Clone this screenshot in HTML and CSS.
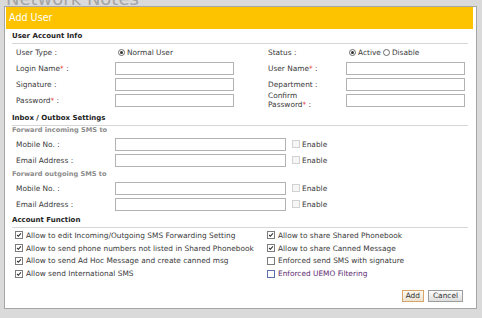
FILE: index.html
```html
<!DOCTYPE html>
<html>
  <head>
    <meta charset="UTF-8" />
    <title>Add User</title>
    <link rel="stylesheet" href="styles.css">
  </head>
  <body>
    <h1 class="page-title">Network Notes</h1>

    <div class="dialog">
      <div class="dialog-title">Add User</div>
      <div class="dialog-body">

        <div class="section-head first">User Account Info</div>
        <div class="info-grid">
          <div class="label">User Type :</div>
          <div class="field"><span class="radio on"></span>Normal User</div>
          <div class="label">Status :</div>
          <div class="field"><span class="radio on"></span>Active <span class="radio gap"></span>Disable</div>

          <div class="label">Login Name<span class="req">*</span> :</div>
          <div class="field"><input type="text" class="text-in" /></div>
          <div class="label">User Name<span class="req">*</span> :</div>
          <div class="field"><input type="text" class="text-in" /></div>

          <div class="label">Signature :</div>
          <div class="field"><input type="text" class="text-in" /></div>
          <div class="label">Department :</div>
          <div class="field"><input type="text" class="text-in" /></div>

          <div class="label">Password<span class="req">*</span> :</div>
          <div class="field"><input type="text" class="text-in" /></div>
          <div class="label two-line">Confirm<br />Password<span class="req">*</span> :</div>
          <div class="field"><input type="text" class="text-in" /></div>
        </div>

        <div class="section-head">Inbox / Outbox Settings</div>
        <div class="sub-head">Forward incoming SMS to</div>
        <div class="fwd-grid">
          <div class="label">Mobile No. :</div>
          <div class="field"><input type="text" class="text-in wide" /></div>
          <div class="field"><span class="check off"></span>Enable</div>
          <div class="label">Email Address :</div>
          <div class="field"><input type="text" class="text-in wide" /></div>
          <div class="field"><span class="check off"></span>Enable</div>
        </div>
        <div class="sub-head second">Forward outgoing SMS to</div>
        <div class="fwd-grid">
          <div class="label">Mobile No. :</div>
          <div class="field"><input type="text" class="text-in wide" /></div>
          <div class="field"><span class="check off"></span>Enable</div>
          <div class="label">Email Address :</div>
          <div class="field"><input type="text" class="text-in wide" /></div>
          <div class="field"><span class="check off"></span>Enable</div>
        </div>

        <div class="section-head third">Account Function</div>
        <div class="func-grid">
          <div class="field"><span class="check"><svg viewBox="0 0 7 7"><path d="M1.3 3.5 L2.8 5 L5.7 1.7" /></svg></span>Allow to edit Incoming/Outgoing SMS Forwarding Setting</div>
          <div class="field"><span class="check"><svg viewBox="0 0 7 7"><path d="M1.3 3.5 L2.8 5 L5.7 1.7" /></svg></span>Allow to share Shared Phonebook</div>
          <div class="field"><span class="check"><svg viewBox="0 0 7 7"><path d="M1.3 3.5 L2.8 5 L5.7 1.7" /></svg></span>Allow to send phone numbers not listed in Shared Phonebook</div>
          <div class="field"><span class="check"><svg viewBox="0 0 7 7"><path d="M1.3 3.5 L2.8 5 L5.7 1.7" /></svg></span>Allow to share Canned Message</div>
          <div class="field"><span class="check"><svg viewBox="0 0 7 7"><path d="M1.3 3.5 L2.8 5 L5.7 1.7" /></svg></span>Allow to send Ad Hoc Message and create canned msg</div>
          <div class="field"><span class="check"></span>Enforced send SMS with signature</div>
          <div class="field"><span class="check"><svg viewBox="0 0 7 7"><path d="M1.3 3.5 L2.8 5 L5.7 1.7" /></svg></span>Allow send International SMS</div>
          <div class="field hover"><span class="check"></span>Enforced UEMO Filtering</div>
        </div>

        <div class="buttons">
          <button class="btn add">Add</button>
          <button class="btn cancel">Cancel</button>
        </div>

      </div>
    </div>
  </body>
</html>
```

FILE: styles.css
```css
body {
  margin: 0;
  background: #dadada;
  font-family: "DejaVu Sans", Verdana, sans-serif;
  font-size: 7.4px;
  color: #3a3a3a;
}
.page-title {
  margin: -10px 0 0 6px;
  font-size: 18px;
  line-height: 18px;
  font-weight: normal;
  color: #a4a4a4;
}
.dialog {
  position: absolute;
  left: 4px;
  top: 6px;
  width: 473px;
  height: 303px;
  box-sizing: border-box;
  border: 1px solid #a6a6a6;
  background: #fff;
}
.dialog-title {
  margin: 0 3px 0 1px;
  height: 22px;
  line-height: 22px;
  padding-left: 3px;
  background: #fdc300;
  color: #fff;
  font-size: 9.6px;
}
.dialog-body {
  padding: 0 8px 0 7px;
}
.section-head {
  padding-top: 4px;
  line-height: 13px;
  font-weight: bold;
  font-size: 7px;
  color: #222;
  border-bottom: 1px solid #d6d6d6;
}
.section-head.first {
  padding-top: 1px;
}
.section-head.third {
  padding-top: 2px;
}
.sub-head {
  height: 10px;
  line-height: 9px;
  font-weight: bold;
  font-size: 6.6px;
  color: #8c8c8c;
}
.sub-head.second {
  height: 12px;
  line-height: 12px;
}
.info-grid {
  display: grid;
  grid-template-columns: 99px 153px 78px 1fr;
  grid-auto-rows: 16px;
  align-items: center;
  padding-left: 4px;
}
.fwd-grid {
  display: grid;
  grid-template-columns: 99px 177px 1fr;
  grid-auto-rows: 16px;
  align-items: center;
  padding-left: 4px;
}
.func-grid {
  display: grid;
  grid-template-columns: 252px 1fr;
  grid-auto-rows: 12.8px;
  align-items: center;
  padding-left: 3px;
  padding-top: 1px;
}
.label {
  white-space: nowrap;
}
.two-line {
  line-height: 9px;
}
.req {
  color: #e02020;
}
.field {
  display: flex;
  align-items: center;
  white-space: nowrap;
}
.text-in {
  display: block;
  width: 119px;
  height: 13px;
  box-sizing: border-box;
  border: 1px solid #b2b2b2;
  padding: 0;
  margin: 0;
  background: #fff;
}
.text-in.wide {
  width: 171px;
}
.radio {
  position: relative;
  width: 7px;
  height: 7px;
  box-sizing: border-box;
  border: 1px solid #6a6a6a;
  border-radius: 50%;
  margin: 0 2px 0 3px;
}
.radio.on::after {
  content: "";
  position: absolute;
  left: 1px;
  top: 1px;
  width: 3px;
  height: 3px;
  border-radius: 50%;
  background: #333;
}
.radio.gap {
  margin-left: 2px;
}
.check {
  width: 8px;
  height: 8px;
  box-sizing: border-box;
  border: 1px solid #7c7c7c;
  background: #fff;
  margin-right: 3px;
}
.check svg {
  display: block;
  width: 6px;
  height: 6px;
}
.check path {
  fill: none;
  stroke: #2e2e2e;
  stroke-width: 1.3;
}
.check.off {
  border-color: #d2d2d2;
  background: #f6f6f6;
  margin-right: 2px;
}
.hover {
  color: #5a2a6e;
}
.hover .check {
  border-color: #5f6fae;
}
.buttons {
  display: flex;
  justify-content: flex-end;
  gap: 4px;
  margin-top: 10px;
  padding-right: 5px;
}
.btn {
  height: 12px;
  padding: 0 3px;
  font-family: "DejaVu Sans", Verdana, sans-serif;
  font-size: 7.4px;
  line-height: 10px;
  color: #333;
  border: 1px solid #9c9c9c;
  background: linear-gradient(#fbfbfb, #dedede);
}
.btn.add {
  border-color: #d9a46c;
  background: linear-gradient(#fffaf0, #ece2d0);
}
.btn.cancel {
  padding: 0 4px;
}
```
